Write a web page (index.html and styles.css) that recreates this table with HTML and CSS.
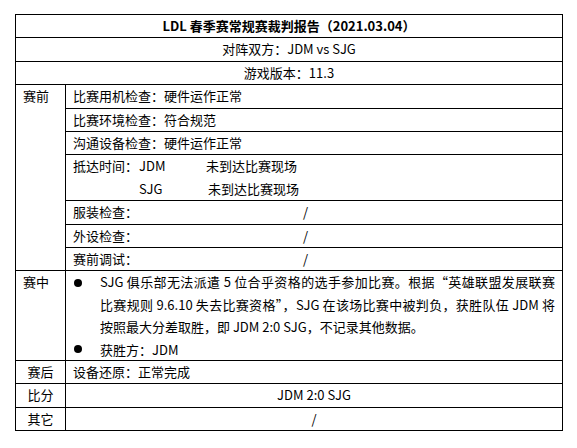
FILE: index.html
```html
<!DOCTYPE html>
<html lang="zh-CN">
<head>
<meta charset="utf-8">
<link rel="stylesheet" href="styles.css">
</head>
<body>
<table class="report">
  <colgroup><col class="c1"><col class="c2"></colgroup>
  <tr><td colspan="2" class="center title">LDL 春季赛常规赛裁判报告（2021.03.04）</td></tr>
  <tr><td colspan="2" class="center">对阵双方：JDM vs SJG</td></tr>
  <tr><td colspan="2" class="center">游戏版本：11.3</td></tr>
  <tr><td rowspan="7" class="side">赛前</td><td class="cell">比赛用机检查：硬件运作正常</td></tr>
  <tr><td class="cell">比赛环境检查：符合规范</td></tr>
  <tr><td class="cell">沟通设备检查：硬件运作正常</td></tr>
  <tr><td class="cell">
    <div class="arrive">
      <span>抵达时间：</span><span>JDM</span><span>未到达比赛现场</span>
      <span></span><span>SJG</span><span class="shift">未到达比赛现场</span>
    </div>
  </td></tr>
  <tr><td class="cell"><span class="lbl">服装检查：</span>/</td></tr>
  <tr><td class="cell"><span class="lbl">外设检查：</span>/</td></tr>
  <tr><td class="cell"><span class="lbl">赛前调试：</span>/</td></tr>
  <tr><td class="side">赛中</td><td class="cell">
    <ul class="list">
      <li class="item"><span class="dot"></span><p class="para">SJG 俱乐部无法派遣 5 位合乎资格的选手参加比赛。根据“英雄联盟发展联赛比赛规则 9.6.10 失去比赛资格”，SJG 在该场比赛中被判负，获胜队伍 JDM 将按照最大分差取胜，即 JDM 2:0 SJG，不记录其他数据。</p></li>
      <li class="item last"><span class="dot"></span><p class="para">获胜方：JDM</p></li>
    </ul>
  </td></tr>
  <tr><td class="side mid">赛后</td><td class="cell">设备还原：正常完成</td></tr>
  <tr><td class="side mid">比分</td><td class="cell center">JDM 2:0 SJG</td></tr>
  <tr><td class="side mid">其它</td><td class="cell center">/</td></tr>
</table>
</body>
</html>
```

FILE: styles.css
```css
html, body {
  margin: 0;
  padding: 0;
  background: #fff;
}
body {
  font-family: "Noto Sans CJK SC", "Microsoft YaHei", sans-serif;
  font-size: 13px;
  color: #000;
}
.report {
  border-collapse: collapse;
  margin: 14px 0 0 15px;
  width: 548px;
  table-layout: fixed;
}
.c1 { width: 50px; }
.report td {
  border: 1px solid #000;
  padding: 0 7px;
  line-height: 22.4px;
  vertical-align: middle;
}
.center { text-align: center; }
.title { font-weight: bold; }
.side { vertical-align: top !important; }
.side.mid { text-align: center; padding: 0 !important; vertical-align: middle !important; }
.arrive {
  display: grid;
  grid-template-columns: 66px 67px auto;
}
.shift { padding-left: 2px; }
.lbl {
  display: inline-block;
  width: 230px;
}
.list {
  list-style: none;
  margin: 0;
  padding: 0;
}
.item {
  display: flex;
  align-items: flex-start;
}
.item.last { line-height: 21px; }
.dot {
  flex: 0 0 27px;
  height: 22.4px;
  display: flex;
  align-items: center;
}
.item.last .dot { height: 21px; }
.dot::before {
  content: "";
  width: 8px;
  height: 8px;
  margin-left: 1px;
  border-radius: 50%;
  background: #000;
}
.para {
  margin: 0;
  flex: 1;
  text-align: justify;
}
```
